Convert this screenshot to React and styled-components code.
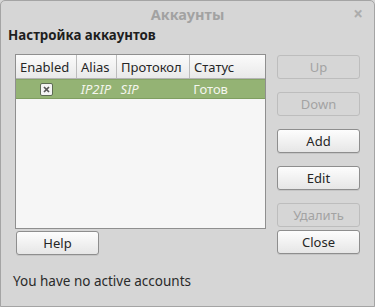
import React from 'react'
import styled, { createGlobalStyle } from 'styled-components'

const GlobalStyle = createGlobalStyle`
  html, body {
    margin: 0;
    padding: 0;
    background: #d6d6d6;
  }
  * {
    box-sizing: border-box;
  }
`

const columns = [
  { title: 'Enabled', width: 61 },
  { title: 'Alias', width: 40 },
  { title: 'Протокол', width: 73 },
  { title: 'Статус', width: 76 },
]

const rightButtons = [
  { label: 'Up', disabled: true, gap: 0 },
  { label: 'Down', disabled: true, gap: 13 },
  { label: 'Add', disabled: false, gap: 13 },
  { label: 'Edit', disabled: false, gap: 13 },
  { label: 'Удалить', disabled: true, gap: 13 },
  { label: 'Close', disabled: false, gap: 3 },
]

export default function App() {
  return (
    <>
      <GlobalStyle />
      <Window>
        <TitleBar>
          Аккаунты
          <CloseX>×</CloseX>
        </TitleBar>
        <Heading>Настройка аккаунтов</Heading>
        <Body>
          <LeftColumn>
            <Table>
              <HeaderRow>
                {columns.map(c => (
                  <HeaderCell key={c.title} $width={c.width}>
                    {c.title}
                  </HeaderCell>
                ))}
              </HeaderRow>
              <SelectedRow>
                <Cell $width={61} $center>
                  <Check>
                    <svg width="7" height="7" viewBox="0 0 7 7">
                      <path d="M1 1 L6 6 M6 1 L1 6" stroke="#555" strokeWidth="1.7" />
                    </svg>
                  </Check>
                </Cell>
                <Cell $width={40} $italic>IP2IP</Cell>
                <Cell $width={73} $italic>SIP</Cell>
                <Cell $width={76}>Готов</Cell>
              </SelectedRow>
            </Table>
            <Button>Help</Button>
          </LeftColumn>
          <RightColumn>
            {rightButtons.map(b => (
              <Button key={b.label} disabled={b.disabled} $gap={b.gap}>
                {b.label}
              </Button>
            ))}
          </RightColumn>
        </Body>
        <Status>You have no active accounts</Status>
      </Window>
    </>
  )
}

const Window = styled.div`
  width: 375px;
  height: 307px;
  border: 1px solid #a4a4a4;
  border-radius: 5px 5px 0 0;
  background: #d6d6d6;
  font-family: 'Noto Sans', 'DejaVu Sans', sans-serif;
  font-size: 13px;
  color: #2a2a2a;
  display: flex;
  flex-direction: column;
`

const TitleBar = styled.div`
  position: relative;
  height: 25px;
  display: flex;
  align-items: center;
  justify-content: center;
  font-weight: 700;
  font-size: 14.5px;
  color: #a2a2a2;
`

const CloseX = styled.span`
  position: absolute;
  right: 11px;
  top: 1px;
  font-size: 17px;
  font-weight: 700;
  color: #acacac;
`

const Heading = styled.div`
  padding-left: 7px;
  height: 18px;
  line-height: 18px;
  font-weight: 700;
  font-size: 13.3px;
  color: #1e1e1e;
`

const Body = styled.div`
  display: flex;
  padding-left: 14px;
  margin-top: 10px;
`

const LeftColumn = styled.div`
  display: flex;
  flex-direction: column;
  gap: 2px;
  width: 251px;
`

const RightColumn = styled.div`
  display: flex;
  flex-direction: column;
  margin-left: 10px;
  padding-top: 1px;
  width: 83px;
`

const Table = styled.div`
  height: 175px;
  border: 1px solid #8f8f8f;
  background: #f6f6f6;
`

const HeaderRow = styled.div`
  display: flex;
  height: 24px;
  background: linear-gradient(#fbfbfb, #e9e9e9);
  border-bottom: 1px solid #b4b4b4;
`

const HeaderCell = styled.div`
  width: ${p => p.$width}px;
  padding-left: 4px;
  display: flex;
  align-items: center;
  border-right: 1px solid #bcbcbc;
  color: #262626;
  white-space: nowrap;
  &:last-child {
    border-right: none;
    flex: 1;
  }
`

const SelectedRow = styled.div`
  display: flex;
  height: 20px;
  background: #94b374;
  border-top: 1px solid #86a566;
  border-bottom: 1px solid #7f9e60;
  color: #f4f6ee;
`

const Cell = styled.div`
  width: ${p => p.$width}px;
  padding-left: ${p => (p.$center ? 0 : 4)}px;
  display: flex;
  align-items: center;
  justify-content: ${p => (p.$center ? 'center' : 'flex-start')};
  font-style: ${p => (p.$italic ? 'italic' : 'normal')};
`

const Check = styled.div`
  width: 13px;
  height: 13px;
  border: 1px solid #5d6b53;
  border-radius: 2px;
  background: #f4f4f4;
  display: flex;
  align-items: center;
  justify-content: center;
`

const Button = styled.button`
  width: 83px;
  height: 24px;
  margin-top: ${p => p.$gap || 0}px;
  margin-left: 1px;
  font-family: inherit;
  font-size: 13px;
  color: #262626;
  background: linear-gradient(#fdfdfd, #e6e6e6);
  border: 1px solid #8e8e8e;
  border-radius: 3px;
  box-shadow: 0 1px 0 rgba(0, 0, 0, 0.08);
  padding: 0;

  &:disabled {
    color: #a3a3a3;
    background: #d6d6d6;
    border-color: #bdbdbd;
    box-shadow: none;
  }
`

const Status = styled.div`
  padding-left: 12px;
  margin-top: 17px;
  font-size: 13.5px;
  color: #2a2a2a;
`
